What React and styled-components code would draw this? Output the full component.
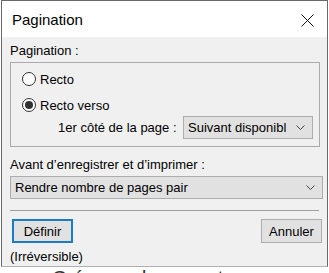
import React from "react";
import styled, { createGlobalStyle } from "styled-components";

const GlobalStyle = createGlobalStyle`
  html, body { margin: 0; padding: 0; background: #ffffff; }
  body {
    font-family: "Liberation Sans", Arial, sans-serif;
    color: #000;
    overflow: hidden;
  }
`;

const Window = styled.div`
  width: 327px;
  box-sizing: border-box;
  margin-left: 1px;
  border: 1px solid #6a6a6a;
  border-bottom-color: #b0b0b0;
  background: #f0f0f0;
`;

const TitleBar = styled.div`
  height: 36px;
  background: #ffffff;
  display: flex;
  align-items: center;
  justify-content: space-between;
  padding: 2px 13px 0 10px;
  box-sizing: border-box;
`;

const Title = styled.div`
  font-size: 15px;
  line-height: 18px;
`;

const Body = styled.div`
  padding: 6px 4px 2px 8px;
  display: flex;
  flex-direction: column;
`;

const Label = styled.div`
  font-size: 13px;
  line-height: 15px;
  margin-top: ${(p) => p.$mt || 0}px;
`;

const GroupBox = styled.div`
  margin: 4px 3px 0 0;
  border: 1px solid #ababab;
  padding: 6px 6px 7px 11px;
  display: flex;
  flex-direction: column;
`;

const RadioRow = styled.label`
  height: 20px;
  display: flex;
  align-items: center;
  gap: 4px;
  font-size: 13px;
  margin-top: ${(p) => p.$mt || 0}px;
`;

const RadioDot = styled.span`
  position: relative;
  width: 14px;
  height: 14px;
  box-sizing: border-box;
  border: 1px solid #333;
  border-radius: 50%;
  background: #fff;
  flex: none;
  &::after {
    content: "";
    display: ${(p) => (p.$checked ? "block" : "none")};
    position: absolute;
    left: 2px;
    top: 2px;
    width: 8px;
    height: 8px;
    border-radius: 50%;
    background: #333;
  }
`;

const SubRow = styled.div`
  margin-top: 1px;
  padding-left: 36px;
  display: flex;
  align-items: center;
  justify-content: space-between;
  font-size: 13px;
`;

const Select = styled.div`
  width: ${(p) => (p.$w ? `${p.$w}px` : "auto")};
  margin-top: ${(p) => p.$mt || 0}px;
  height: 23px;
  box-sizing: border-box;
  border: 1px solid #adadad;
  background: #e1e1e1;
  padding: 0 7px 0 4px;
  display: flex;
  align-items: center;
  justify-content: space-between;
  font-size: 13px;
  white-space: nowrap;
  overflow: hidden;
`;

const Separator = styled.div`
  margin: 11px 4px 0 0;
  height: 1px;
  background: #a0a0a0;
`;

const ButtonRow = styled.div`
  margin-top: 8px;
  padding: 0 1px 0 2px;
  display: flex;
  justify-content: space-between;
`;

const Button = styled.button`
  width: 61px;
  height: 24px;
  box-sizing: border-box;
  background: #e1e1e1;
  border: ${(p) => (p.$primary ? "2px solid #1a7cc4" : "1px solid #adadad")};
  font-family: "Liberation Sans", Arial, sans-serif;
  font-size: 13px;
  color: #000;
  padding: 0;
`;

const Backdrop = styled.div`
  padding: 1px 0 0 52px;
  font-size: 20px;
  line-height: 20px;
  color: #333;
  white-space: nowrap;
`;

const CloseIcon = () => (
  <svg width="13" height="13" viewBox="0 0 13 13">
    <path d="M0.5 0.5 L12.5 12.5 M12.5 0.5 L0.5 12.5" stroke="#111" strokeWidth="1" fill="none" />
  </svg>
);

const Chevron = () => (
  <svg width="9" height="5" viewBox="0 0 9 5" style={{ flex: "none" }}>
    <polyline points="0.5,0.5 4.5,4.5 8.5,0.5" stroke="#444" strokeWidth="1" fill="none" />
  </svg>
);

export default function App() {
  return (
    <>
      <GlobalStyle />
      <Window>
        <TitleBar>
          <Title>Pagination</Title>
          <CloseIcon />
        </TitleBar>
        <Body>
          <Label>Pagination :</Label>
          <GroupBox>
            <RadioRow>
              <RadioDot />
              Recto
            </RadioRow>
            <RadioRow $mt={6}>
              <RadioDot $checked />
              Recto verso
            </RadioRow>
            <SubRow>
              <span>1er côté de la page :</span>
              <Select $w={130}>
                <span>Suivant disponibl</span>
                <Chevron />
              </Select>
            </SubRow>
          </GroupBox>
          <Label $mt={10}>Avant d’enregistrer et d’imprimer :</Label>
          <Select $mt={4}>
            <span>Rendre nombre de pages pair</span>
            <Chevron />
          </Select>
          <Separator />
          <ButtonRow>
            <Button $primary>Définir</Button>
            <Button>Annuler</Button>
          </ButtonRow>
          <Label $mt={6}>(Irréversible)</Label>
        </Body>
      </Window>
      <Backdrop>Créer un document</Backdrop>
    </>
  );
}
